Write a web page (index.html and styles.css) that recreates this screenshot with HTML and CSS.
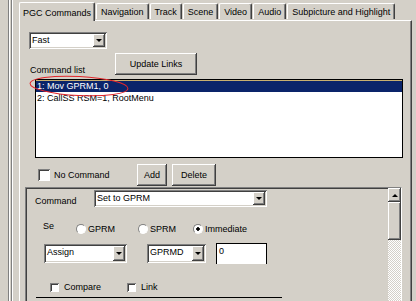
FILE: index.html
```html
<!DOCTYPE html>
<html lang="en">
<head>
    <meta charset="UTF-8">
    <title>PGC Commands</title>
    <link rel="stylesheet" href="styles.css">
</head>
<body>
    <div class="window">
        <div class="rail"></div>

        <div class="tabctl">
            <div class="tabs">
                <div class="tab active">PGC Commands</div>
                <div class="tab">Navigation</div>
                <div class="tab">Track</div>
                <div class="tab">Scene</div>
                <div class="tab">Video</div>
                <div class="tab">Audio</div>
                <div class="tab">Subpicture and Highlight</div>
            </div>

            <div class="panel">
                <div class="combo combo-fast">
                    <span class="combo-text">Fast</span>
                    <span class="combo-arrow"></span>
                </div>

                <div class="list-head">
                    <span class="list-label">Command list</span>
                    <button class="btn btn-update">Update Links</button>
                </div>

                <div class="cmd-list">
                    <div class="cmd-row sel">1: Mov GPRM1, 0</div>
                    <div class="cmd-row">2: CallSS RSM=1, RootMenu</div>
                </div>

                <div class="cmd-actions">
                    <span class="check"></span>
                    <span class="check-label">No Command</span>
                    <button class="btn btn-add">Add</button>
                    <button class="btn btn-delete">Delete</button>
                </div>

                <div class="editor">
                    <div class="form">
                        <div class="form-row">
                            <span class="cmd-label">Command</span>
                            <div class="combo combo-cmd">
                                <span class="combo-text">Set to GPRM</span>
                                <span class="combo-arrow"></span>
                            </div>
                        </div>

                        <div class="radio-row">
                            <span class="se-label">Se</span>
                            <label class="radio radio-gprm"><span class="dot"></span>GPRM</label>
                            <label class="radio radio-sprm"><span class="dot"></span>SPRM</label>
                            <label class="radio"><span class="dot on"></span>Immediate</label>
                        </div>

                        <div class="assign-row">
                            <div class="combo combo-assign">
                                <span class="combo-text">Assign</span>
                                <span class="combo-arrow"></span>
                            </div>
                            <div class="combo combo-reg">
                                <span class="combo-text">GPRMD</span>
                                <span class="combo-arrow"></span>
                            </div>
                            <div class="value-box">0</div>
                        </div>

                        <div class="flag-row">
                            <span class="check small"></span>
                            <span class="flag-label">Compare</span>
                            <span class="check small"></span>
                            <span class="flag-label">Link</span>
                        </div>

                        <div class="rule"></div>
                    </div>

                    <div class="vscroll">
                        <div class="sb-btn"></div>
                        <div class="sb-thumb"></div>
                        <div class="sb-track"></div>
                    </div>
                </div>
            </div>
        </div>
    </div>

    <svg class="mark" width="106" height="26" viewBox="0 0 106 26">
        <ellipse cx="51" cy="12" rx="49" ry="9.5" transform="rotate(3 51 12)" fill="none" stroke="#e3262b" stroke-width="1"/>
    </svg>
</body>
</html>
```

FILE: styles.css
```css
/* Win2k style property sheet */
body {
    margin: 0;
    width: 416px;
    height: 301px;
    overflow: hidden;
    background-color: #d4d0c8;
    font-family: "Liberation Sans", Arial, sans-serif;
    font-size: 9px;
    color: #000;
}

.window {
    display: flex;
    height: 301px;
}

.rail {
    width: 6px;
    margin-left: 8px;
    margin-right: 5px;
    background: linear-gradient(to right,
        #808080 0 1px, #fff 1px 2px, #d4d0c8 2px 3px,
        #808080 3px 4px, #fff 4px 5px, #d4d0c8 5px 6px);
}

.tabctl {
    width: 393px;
    display: flex;
    flex-direction: column;
}

/* tabs */
.tabs {
    display: flex;
    align-items: flex-end;
    height: 20px;
    position: relative;
    z-index: 1;
}

.tab {
    height: 16px;
    box-sizing: border-box;
    padding: 3px 4px 0 4px;
    line-height: 10px;
    white-space: nowrap;
    border-top: 1px solid #fff;
    border-left: 1px solid #fff;
    border-right: 1px solid #404040;
    box-shadow: inset -1px 0 #808080;
    border-radius: 2px 2px 0 0;
    margin-right: 1px;
    margin-bottom: 1px;
}

.tab.active {
    height: 19px;
    margin-bottom: -1px;
    padding: 5px 3px 0 3px;
    background-color: #d4d0c8;
}

/* panel */
.panel {
    flex: 1;
    display: flex;
    flex-direction: column;
    border-top: 1px solid #fff;
    border-left: 1px solid #fff;
    border-right: 1px solid #404040;
    box-shadow: inset -1px 0 #808080;
}

/* combo boxes */
.combo {
    display: flex;
    box-sizing: border-box;
    padding: 2px;
    background-color: #fff;
    box-shadow: inset 1px 1px #808080, inset -1px -1px #fff,
                inset 2px 2px #404040, inset -2px -2px #d4d0c8;
}

.combo-text {
    flex: 1;
    padding-left: 1px;
    line-height: 13px;
    white-space: nowrap;
}

.combo-arrow {
    width: 12px;
    display: flex;
    align-items: center;
    justify-content: center;
    background-color: #d4d0c8;
    box-shadow: inset -1px -1px #404040, inset 1px 1px #fff,
                inset -2px -2px #808080;
}

.combo-arrow::after {
    content: "";
    border-left: 3px solid transparent;
    border-right: 3px solid transparent;
    border-top: 3px solid #000;
}

.combo-fast {
    margin: 11px 0 0 9px;
    width: 78px;
    height: 17px;
}

/* buttons */
.btn {
    box-sizing: border-box;
    padding: 0;
    font-family: inherit;
    font-size: 9px;
    color: #000;
    background-color: #d4d0c8;
    border: none;
    box-shadow: inset -1px -1px #404040, inset 1px 1px #fff,
                inset -2px -2px #808080;
}

.list-head {
    display: flex;
    align-items: flex-end;
    margin: 4px 0 0 10px;
}

.list-label {
    width: 85px;
    line-height: 10px;
}

.btn-update {
    width: 82px;
    height: 22px;
}

/* command list */
.cmd-list {
    margin: 4px 0 0 15px;
    width: 368px;
    height: 79px;
    box-sizing: border-box;
    border: 1px solid #000;
    background-color: #fff;
}

.cmd-row {
    height: 12px;
    line-height: 12px;
    padding-left: 1px;
    white-space: nowrap;
}

.cmd-row.sel {
    background-color: #0a246a;
    color: #fff;
    box-shadow: inset 0 1px #c8b070;
}

.cmd-actions {
    display: flex;
    align-items: center;
    margin: 6px 0 0 18px;
}

.check {
    width: 12px;
    height: 12px;
    box-sizing: border-box;
    background-color: #fff;
    box-shadow: inset 1px 1px #808080, inset -1px -1px #fff,
                inset 2px 2px #404040;
}

.check-label {
    width: 83px;
    margin-left: 4px;
}

.btn-add {
    width: 30px;
    height: 22px;
}

.btn-delete {
    width: 44px;
    height: 22px;
    margin-left: 5px;
}

/* command editor */
.editor {
    flex: 1;
    display: flex;
    margin: 1px 0 0 5px;
    width: 377px;
    box-sizing: border-box;
    border-top: 1px solid #808080;
    border-left: 1px solid #808080;
    border-right: 1px solid #fff;
    box-shadow: inset 1px 1px #404040;
}

.form {
    flex: 1;
    padding-top: 2px;
}

.form-row {
    display: flex;
    align-items: flex-end;
}

.cmd-label {
    width: 59px;
    margin-left: 9px;
    line-height: 12px;
}

.combo-cmd {
    width: 173px;
    height: 17px;
}

.radio-row {
    display: flex;
    align-items: center;
    margin: 16px 0 0 17px;
    height: 11px;
}

.se-label {
    width: 33px;
    margin-top: -5px;
}

.radio {
    display: flex;
    align-items: center;
}

.radio-gprm { width: 62px; }
.radio-sprm { width: 55px; }

.dot {
    width: 10px;
    height: 10px;
    margin-right: 2px;
    box-sizing: border-box;
    border-radius: 50%;
    background-color: #fff;
    border: 1px solid #808080;
    border-right-color: #fff;
    border-bottom-color: #fff;
}

.dot.on {
    background: radial-gradient(circle, #000 0 1.5px, #fff 2px);
}

.assign-row {
    display: flex;
    align-items: center;
    margin: 9px 0 0 18px;
}

.combo-assign {
    width: 83px;
    height: 19px;
}

.combo-reg {
    width: 59px;
    height: 19px;
    margin-left: 20px;
}

.value-box {
    width: 51px;
    height: 21px;
    margin-left: 10px;
    box-sizing: border-box;
    padding: 2px 0 0 2px;
    background-color: #fff;
    border: 1px solid #000;
    border-bottom: none;
}

.flag-row {
    display: flex;
    align-items: center;
    margin: 18px 0 0 24px;
}

.check.small {
    width: 9px;
    height: 9px;
}

.flag-label {
    width: 63px;
    margin-left: 5px;
}

.rule {
    margin: 5px 0 0 10px;
    width: 246px;
    border-top: 1px solid #000;
}

/* scrollbar */
.vscroll {
    width: 13px;
    display: flex;
    flex-direction: column;
}

.sb-btn {
    height: 14px;
    display: flex;
    align-items: center;
    justify-content: center;
    background-color: #d4d0c8;
    box-shadow: inset -1px -1px #404040, inset 1px 1px #fff,
                inset -2px -2px #808080;
}

.sb-btn::after {
    content: "";
    border-left: 3px solid transparent;
    border-right: 3px solid transparent;
    border-bottom: 3px solid #000;
}

.sb-thumb {
    height: 38px;
    background-color: #d4d0c8;
    box-shadow: inset -1px -1px #404040, inset 1px 1px #fff,
                inset -2px -2px #808080;
}

.sb-track {
    flex: 1;
    background: repeating-conic-gradient(#fff 0 25%, #d4d0c8 0 50%) 0 0 / 2px 2px;
}

/* red hand-drawn mark over the first command */
.mark {
    position: absolute;
    left: 28px;
    top: 74px;
}
```
